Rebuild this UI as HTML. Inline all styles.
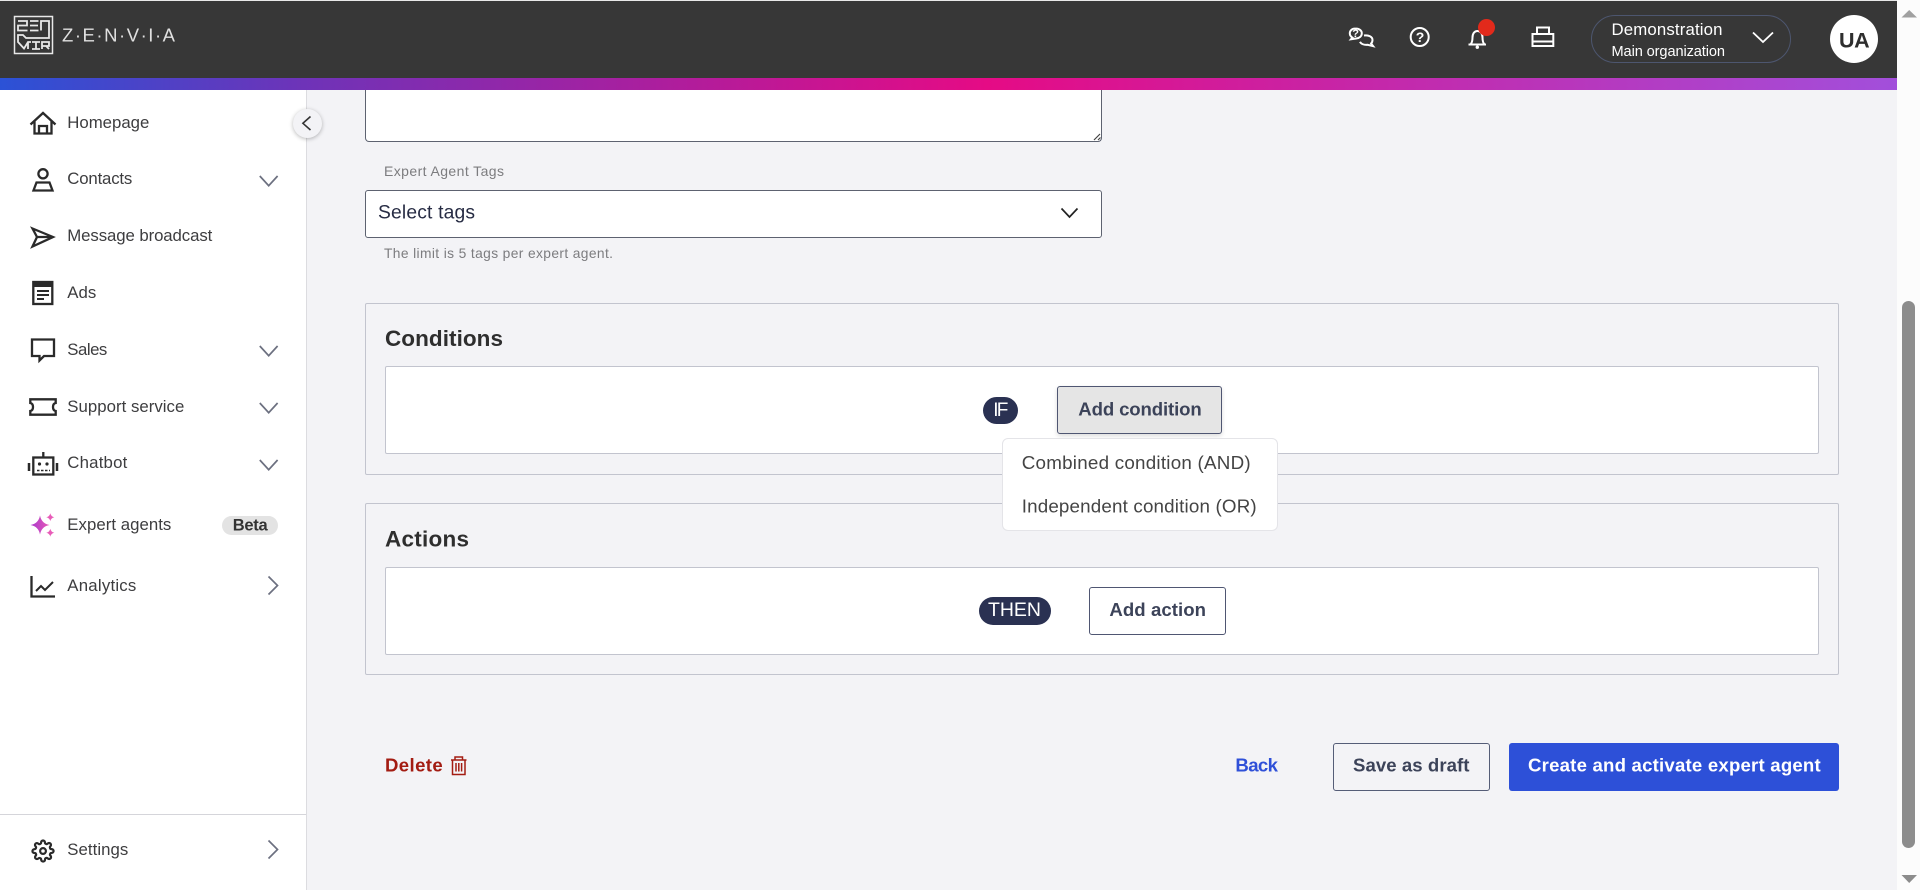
<!DOCTYPE html>
<html lang="en"><head><meta charset="utf-8"><title>Zenvia</title>
<style>
html,body{margin:0;padding:0;width:1920px;height:890px;overflow:hidden;background:#f3f3f6;font-family:"Liberation Sans",sans-serif}
div{position:absolute;box-sizing:border-box}
svg{position:absolute;left:0;top:0}
svg text{font-family:"Liberation Sans",sans-serif}
.nav{font-size:16.8px;fill:#3d3d3f}
.cv{fill:none;stroke:#6c7080;stroke-width:1.7}
.ic{fill:none;stroke:#2a2a2a;stroke-width:2.3}
.wi{fill:none;stroke:#fff;stroke-width:2}
.b{font-weight:700;font-size:18.6px}
</style></head><body>
<div style="left:0;top:0;width:1897px;height:78px;background:#373737;border-top:1px solid #e8e8e8"></div>
<div style="left:0;top:78px;width:1897px;height:12px;background:linear-gradient(90deg,#2b52d6 0,#6e33b8 16%,#e50b85 52%,#c824a5 70%,#a24fdb 100%)"></div>
<div style="left:1897px;top:0;width:23px;height:890px;background:#fcfcfc"></div>
<div style="left:1902px;top:301px;width:13px;height:547px;border-radius:7px;background:#8c8c8c"></div>
<div style="left:0;top:90px;width:307px;height:800px;background:#fff;border-right:1px solid #dcdce0"></div>
<div style="left:0;top:814px;width:306px;height:1px;background:#d5d5da"></div>
<div style="left:292.5px;top:109px;width:29px;height:29px;border-radius:50%;background:#f3f3f6;box-shadow:0 1px 4px rgba(0,0,0,.28)"></div>
<div style="left:1591px;top:15px;width:200px;height:48px;border-radius:24px;border:1px solid #4d566f"></div>
<div style="left:1830px;top:15px;width:48px;height:48px;border-radius:50%;background:#fff"></div>
<div style="left:365px;top:90px;width:737px;height:52px;background:#fff;border:1px solid #5d6270;border-top:0;border-radius:0 0 4px 4px"></div>
<div style="left:365px;top:190px;width:737px;height:48px;background:#fff;border:1px solid #5d6270;border-radius:3px"></div>
<div style="left:365px;top:303px;width:1474px;height:172px;border:1px solid #c2c4ce;border-radius:2px"></div>
<div style="left:385px;top:366px;width:1434px;height:88px;background:#fff;border:1px solid #c2c4ce;border-radius:2px"></div>
<div style="left:365px;top:503px;width:1474px;height:172px;border:1px solid #c2c4ce;border-radius:2px"></div>
<div style="left:385px;top:567px;width:1434px;height:88px;background:#fff;border:1px solid #c2c4ce;border-radius:2px"></div>
<div style="left:983px;top:397px;width:35px;height:27px;border-radius:14px;background:#2a3152"></div>
<div style="left:1057px;top:386px;width:165px;height:48px;background:#e5e5e5;border:1px solid #4f5672;border-radius:3px;box-shadow:0 2px 5px rgba(0,0,0,.14)"></div>
<div style="left:1001.5px;top:438px;width:276.5px;height:93px;background:#fff;border:1px solid #e4e4e8;border-radius:6px"></div>
<div style="left:979px;top:597px;width:72px;height:28px;border-radius:14px;background:#2a3152"></div>
<div style="left:1089px;top:587px;width:137px;height:48px;background:#fff;border:1px solid #4f5672;border-radius:3px"></div>
<div style="left:1333px;top:743px;width:157px;height:48px;border:1px solid #555d77;border-radius:3px"></div>
<div style="left:1509px;top:743px;width:330px;height:48px;background:#2d50d8;border-radius:3px"></div>

<svg width="1920" height="890" viewBox="0 0 1920 890">
<defs><linearGradient id="sp" x1="0" y1="0" x2="1" y2="0"><stop offset="0" stop-color="#a838cc"/><stop offset="1" stop-color="#e85cb8"/></linearGradient></defs>
<!-- logo -->
<rect x="14.5" y="16.5" width="38" height="37" fill="none" stroke="#e8e8e8" stroke-width="1.5"/>
<path d="M18 21H27V25.5H18V30.5H27.500M30 21H38.500M30 25.500H38M30 30.500H38.500M41 30.500V21H49V38H26L23 35H18V42L24 48.500L28 42H31M28 42V49M32 42H40M36 42V49M32 49H40M42 49V42H49V46H42M46 46L49 49" fill="none" stroke="#e8e8e8" stroke-width="1.800"/>
<text x="62" y="41.500" textLength="113" font-size="18.500" fill="#e0e0e0">Z·E·N·V·I·A</text>
<!-- header icons -->
<path class="wi" d="M1355.500 28.500c-3.400 0-5.700 2.100-5.700 4.800 0 2.100 1.200 3.500 2.600 4.300l-1.400 1.700 5.200-.8c3.200-.3 5.600-2.200 5.600-5.200 0-2.800-2.700-4.800-6.300-4.800z"/>
<path class="wi" d="M1364 35.500c4.500-.7 8.500 1.200 8.500 4.500 0 1.500-.5 2.600-1.400 3.500l2 2.600-5.600-1.300c-3.300.3-6.400-.8-7.500-3"/>
<text x="1352.300" y="37" font-size="11" font-weight="700" fill="#fff">?</text>
<circle class="wi" cx="1419.700" cy="37" r="9"/>
<text x="1415.800" y="42" font-size="14" font-weight="700" fill="#fff">?</text>
<path class="wi" d="M1468.500 44.500h17.500M1470.500 44.500c1.800-2 2-4 2-7 0-4 2-6.500 5-6.500s5 2.500 5 6.500c0 3 .2 5 2 7"/>
<circle cx="1477.300" cy="47.200" r="1.700" fill="#fff"/>
<circle cx="1486.500" cy="27.500" r="8.500" fill="#e22a1b"/>
<path class="wi" d="M1537 34V27.500H1549V34M1532.500 34H1553.300V46H1532.500ZM1532.500 41.500H1553.300"/>
<text x="1611.500" y="35" textLength="111" font-size="16.800" fill="#fff">Demonstration</text>
<text x="1611.500" y="56" textLength="113.500" font-size="14.600" fill="#fff">Main organization</text>
<path d="M1753 32.500L1763 42L1773 32.500" fill="none" stroke="#fff" stroke-width="1.800"/>
<text x="1839" y="47.500" textLength="30.600" font-size="21.500" font-weight="700" fill="#2e2e2e">UA</text>
<!-- sidebar icons -->
<path d="M310.500 116.500L302.900 123.300L310.500 130" fill="none" stroke="#333" stroke-width="1.600"/>
<path class="ic" d="M30.500 124.500L43 113L55.500 124.500M34.500 121.500V133.500H51.500V121.500M39 133.500V126H47V133.500"/>
<circle class="ic" cx="43" cy="173.800" r="4.600"/><path class="ic" d="M36.500 182.500H49.500L52.500 190.500H33.500Z"/>
<path class="ic" d="M32.500 228.500L53 237L32.500 246.500L37 237ZM37 237H53"/>
<rect class="ic" x="33.300" y="282" width="19" height="22"/><rect x="33" y="281" width="20" height="6" fill="#2a2a2a"/><path d="M37 291H49M37 295H49M37 299H44" fill="none" stroke="#2a2a2a" stroke-width="2"/>
<path class="ic" d="M32 339.500H54V356H44L39.500 360.500V356H32Z"/>
<path class="ic" d="M30.300 399.300H55.700V403Q53 403.500 53 407Q53 410.500 55.700 411V414.700H30.300V411Q33 410.500 33 407Q33 403.500 30.300 403Z"/>
<rect class="ic" x="33.300" y="457.500" width="20" height="17"/><path class="ic" d="M43.300 452V457"/><path d="M29 463V471M57 463V471" stroke="#2a2a2a" stroke-width="2.500" fill="none"/>
<circle cx="39.500" cy="464" r="1.600" fill="#2a2a2a"/><circle cx="47" cy="464" r="1.600" fill="#2a2a2a"/><path d="M37 470.500H50" stroke="#2a2a2a" stroke-width="1.500" stroke-dasharray="2.500 1.500"/>
<path fill="url(#sp)" d="M40 515.500Q41.500 523.500 49.500 525Q41.500 526.500 40 534.500Q38.500 526.500 30.500 525Q38.500 523.500 40 515.500Z"/>
<path fill="#e85cb8" d="M50.300 513.300Q51 516.600 54.300 517.300Q51 518 50.300 521.300Q49.600 518 46.300 517.300Q49.600 516.600 50.300 513.300ZM50.300 528.700Q51 532 54.300 532.700Q51 533.400 50.300 536.700Q49.600 533.400 46.300 532.700Q49.600 532 50.300 528.700Z"/>
<path class="ic" d="M31.500 576V596.500H55"/><path d="M36 591L41 586L45 590L53 582" fill="none" stroke="#2a2a2a" stroke-width="2"/>
<g transform="translate(31.500 839.500) scale(.96)"><path class="ic" d="M12 15a3 3 0 1 0 0-6 3 3 0 0 0 0 6z M19.400 15a1.650 1.650 0 0 0 .33 1.820l.06.06a2 2 0 0 1 0 2.830 2 2 0 0 1-2.830 0l-.06-.06a1.650 1.650 0 0 0-1.820-.33 1.650 1.650 0 0 0-1 1.510V21a2 2 0 0 1-2 2 2 2 0 0 1-2-2v-.09A1.650 1.650 0 0 0 9 19.400a1.650 1.650 0 0 0-1.820.33l-.06.06a2 2 0 0 1-2.830 0 2 2 0 0 1 0-2.830l.06-.06a1.650 1.650 0 0 0 .33-1.820 1.650 1.650 0 0 0-1.510-1H3a2 2 0 0 1-2-2 2 2 0 0 1 2-2h.09A1.650 1.650 0 0 0 4.600 9a1.650 1.650 0 0 0-.33-1.820l-.06-.06a2 2 0 0 1 0-2.830 2 2 0 0 1 2.830 0l.06.06a1.650 1.650 0 0 0 1.820.33H9a1.650 1.650 0 0 0 1-1.510V3a2 2 0 0 1 2-2 2 2 0 0 1 2 2v.09a1.650 1.650 0 0 0 1 1.510 1.650 1.650 0 0 0 1.820-.33l.06-.06a2 2 0 0 1 2.830 0 2 2 0 0 1 0 2.830l-.06.06a1.650 1.650 0 0 0-.33 1.820V9a1.650 1.650 0 0 0 1.510 1H21a2 2 0 0 1 2 2 2 2 0 0 1-2 2h-.09a1.650 1.650 0 0 0-1.510 1z"/></g>
<!-- sidebar text -->
<text class="nav" x="67.300" y="128" textLength="82">Homepage</text>
<text class="nav" x="67.300" y="184" textLength="65">Contacts</text>
<text class="nav" x="67.300" y="241" textLength="145">Message broadcast</text>
<text class="nav" x="67.300" y="298" textLength="29">Ads</text>
<text class="nav" x="67.300" y="355" textLength="40">Sales</text>
<text class="nav" x="67.300" y="412" textLength="117">Support service</text>
<text class="nav" x="67.300" y="468" textLength="60">Chatbot</text>
<text class="nav" x="67.300" y="530" textLength="104">Expert agents</text>
<text class="nav" x="67.300" y="591" textLength="69">Analytics</text>
<text class="nav" x="67.300" y="855" textLength="61">Settings</text>
<rect x="222" y="516" width="56" height="19" rx="9.500" fill="#e3e3e3"/>
<text x="232.700" y="530.500" textLength="35" font-size="16.500" font-weight="700" fill="#333">Beta</text>
<path class="cv" d="M259.800 176L268.700 185.700L277.600 176"/>
<path class="cv" d="M259.800 346L268.700 355.700L277.600 346"/>
<path class="cv" d="M259.800 403L268.700 412.700L277.600 403"/>
<path class="cv" d="M259.800 460L268.700 469.700L277.600 460"/>
<path class="cv" d="M268.500 576.500L277.500 585.500L268.500 594.500"/>
<path class="cv" d="M268.500 840.500L277.500 849.500L268.500 858.500"/>
<!-- form -->
<path d="M1094 140L1100 134M1098 140L1100.500 137.500" stroke="#444" stroke-width="1.200" fill="none"/>
<text x="384" y="176" textLength="120" font-size="14" fill="#7c7c7f">Expert Agent Tags</text>
<text x="378" y="218.500" textLength="97" font-size="19.300" fill="#272c44">Select tags</text>
<path d="M1061.500 208.500L1069.500 217L1077.500 208.500" fill="none" stroke="#222" stroke-width="1.700"/>
<text x="384" y="258" textLength="229" font-size="13.800" fill="#7c7c7f">The limit is 5 tags per expert agent.</text>
<text x="385" y="346" textLength="118" font-size="22.500" font-weight="700" fill="#2e2e2e">Conditions</text>
<text x="385" y="546.500" textLength="84" font-size="22.500" font-weight="700" fill="#2e2e2e">Actions</text>
<text x="993.300" y="416" textLength="15" font-size="19" fill="#fff">IF</text>
<text class="b" x="1078.300" y="415.700" textLength="123.400" fill="#3c4359">Add condition</text>
<text x="1021.700" y="469" textLength="229" font-size="18.800" fill="#444">Combined condition (AND)</text>
<text x="1021.700" y="512.300" textLength="235" font-size="18.800" fill="#444">Independent condition (OR)</text>
<text x="988" y="616" textLength="53" font-size="19.500" fill="#fff">THEN</text>
<text class="b" x="1109.400" y="616" textLength="96.600" fill="#3c4359">Add action</text>
<text class="b" x="385" y="771.700" textLength="57.700" fill="#a31c12">Delete</text>
<path d="M451 760H466.500M455 760V757H462.500V760M452.500 760V774.500H465V760M456 763V771.500M458.800 763V771.500M461.600 763V771.500" fill="none" stroke="#a31c12" stroke-width="1.500"/>
<text class="b" x="1235.400" y="771.700" textLength="42.600" fill="#2f50d8">Back</text>
<text class="b" x="1353" y="771.700" textLength="116.500" fill="#3c4359">Save as draft</text>
<text class="b" x="1528" y="771.700" textLength="292.700" fill="#fff">Create and activate expert agent</text>
<!-- scrollbar arrows -->
<path d="M1901.500 17.500H1917L1909.200 10Z" fill="#a0a0a0"/>
<path d="M1901.500 875H1917L1909.200 883Z" fill="#8c8c8c"/>
</svg>
</body></html>
